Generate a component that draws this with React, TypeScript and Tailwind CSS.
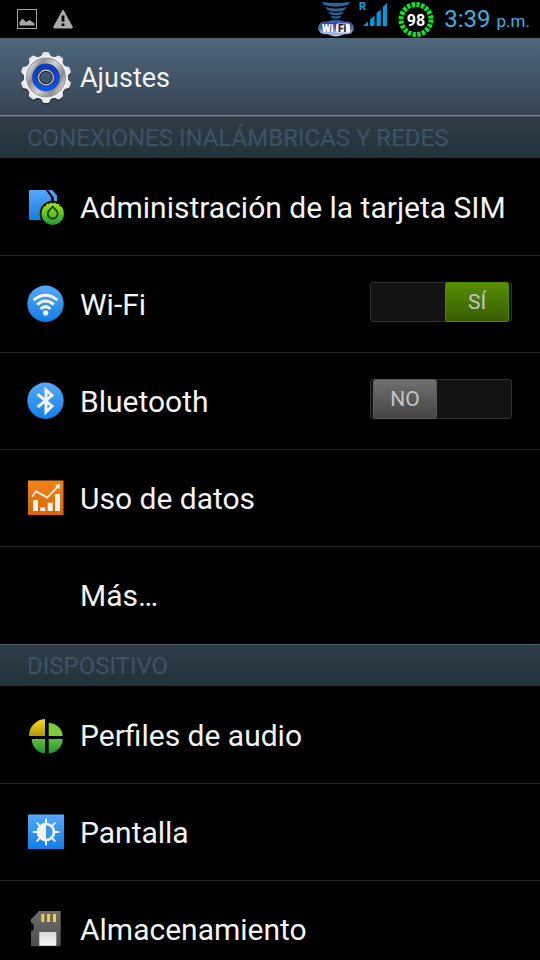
import { useState } from "react";
import type { ReactNode } from "react";

const GEAR_TEETH = [0, 36, 72, 108, 144, 180, 216, 252, 288, 324];
const SUN_RAYS = [0, 45, 90, 135, 180, 225, 270, 315];

function GearIcon() {
  return (
    <svg viewBox="0 0 52 54" className="h-[54px] w-[52px] shrink-0" aria-hidden="true">
      <defs>
        <linearGradient id="gear-body" x1="0" y1="0" x2="0" y2="1">
          <stop offset="0" stopColor="#dedede" />
          <stop offset="1" stopColor="#f6f6f6" />
        </linearGradient>
        <linearGradient id="gear-disc" x1="0" y1="0.2" x2="1" y2="0.8">
          <stop offset="0" stopColor="#f4f4f4" />
          <stop offset="0.25" stopColor="#8f8f8f" />
          <stop offset="0.5" stopColor="#d4d4d4" />
          <stop offset="0.78" stopColor="#8c8c8c" />
          <stop offset="1" stopColor="#efefef" />
        </linearGradient>
        <linearGradient id="gear-ring" x1="0" y1="0" x2="0" y2="1">
          <stop offset="0" stopColor="#1238b8" />
          <stop offset="1" stopColor="#1453dc" />
        </linearGradient>
        <g id="gear-shape">
          <circle cx="26" cy="26.5" r="22" />
          {GEAR_TEETH.map((a) => (
            <path key={a} d="M19.4 6.5 Q21.8 5 22.6 2.2 Q23 1 24.2 1 H27.8 Q29 1 29.4 2.2 Q30.2 5 32.6 6.5 Z" transform={`rotate(${a} 26 26.5)`} />
          ))}
        </g>
      </defs>
      <use href="#gear-shape" y="1.5" fill="#1d252e" opacity="0.7" />
      <use href="#gear-shape" fill="url(#gear-body)" />
      <circle cx="26" cy="26.5" r="19.5" fill="url(#gear-disc)" stroke="#858585" strokeWidth="0.8" />
      <circle cx="26" cy="26.5" r="10.7" fill="none" stroke="url(#gear-ring)" strokeWidth="6.4" />
      <circle cx="26" cy="26.5" r="7" fill="#42566b" stroke="#262626" strokeWidth="2.4" />
      <circle cx="26" cy="26.5" r="7.4" fill="none" stroke="#d0d0c8" strokeWidth="1.1" />
    </svg>
  );
}

function SimIcon() {
  return (
    <>
      <path d="M21.7 2 H26.3 L31 7.5 V14 H28 V10 Z" fill="#4aa0f5" />
      <path d="M4 2 H20.5 L25 8.5 V32 H4 Q3 32 3 31 V3 Q3 2 4 2 Z" fill="url(#blue)" />
      <path d="M20.8 2 L26 9 V15" fill="none" stroke="#000" strokeWidth="2" />
      <circle cx="26.7" cy="25.7" r="13" fill="#000" />
      <circle cx="26.7" cy="25.7" r="11.2" fill="url(#lime)" />
      <path d="M18.5 16 l1.2 2 M22.3 14 l0.8 2 M26.7 13.5 v2 M31.1 14 l-0.8 2 M34.9 16 l-1.2 2" stroke="#000" strokeWidth="1.5" />
      <path d="M26.7 18.6 L29.6 21.8 A4.9 4.9 0 1 1 23.8 21.8 Z" fill="none" stroke="#123c08" strokeWidth="1.7" />
    </>
  );
}

function WifiIcon() {
  return (
    <>
      <circle cx="19.5" cy="18.7" r="18.2" fill="url(#blue)" />
      <g fill="none" stroke="#f4f4f4" strokeWidth="3">
        <path d="M7.6 15.2 Q19.5 5.4 31.4 15.2" />
        <path d="M11.1 19.7 Q19.5 12.4 27.9 19.7" />
        <path d="M14.6 24 Q19.5 19.2 24.4 24" />
      </g>
      <circle cx="19.6" cy="28" r="2.7" fill="#f0f0f0" />
    </>
  );
}

function BluetoothIcon() {
  return (
    <>
      <circle cx="19.5" cy="18.7" r="18.2" fill="url(#blue)" />
      <path
        d="M11.6 12.2 L26 24 L20 30 V8 L26 13.4 L11.6 25.2"
        fill="none"
        stroke="#f4f4f4"
        strokeWidth="3"
      />
    </>
  );
}

function DataIcon() {
  return (
    <>
      <rect x="2" y="1.5" width="35.5" height="34.5" fill="url(#orange)" />
      <g fill="#f4f4f4">
        <rect x="7" y="21" width="5" height="11" />
        <rect x="14.3" y="28.3" width="5" height="3.7" />
        <rect x="21.7" y="23.7" width="5" height="8.3" />
        <rect x="29" y="15" width="5" height="17" />
        <path d="M34 4.8 L33.4 10.6 L28.8 6.2 Z" />
      </g>
      <path d="M6.3 17.7 L9.9 12.2 L21.2 18.6 L32 7.4" fill="none" stroke="#f4f4f4" strokeWidth="1.7" />
    </>
  );
}

function AudioIcon() {
  return (
    <>
      <path d="M19 3 V20 H3 A17 17 0 0 1 19 3 Z" fill="url(#yellow)" />
      <path d="M22.7 6.7 V20 H36.7 A15 14 0 0 0 22.7 6.7 Z" fill="#7bcb3a" />
      <path d="M19 37.3 V23 H5.7 A14 14.5 0 0 0 19 37.3 Z" fill="url(#green)" />
      <path d="M22.7 37.3 V23 H36.7 A14.5 14.5 0 0 1 22.7 37.3 Z" fill="url(#green)" />
    </>
  );
}

function DisplayIcon() {
  return (
    <>
      <rect x="2" y="1.5" width="36" height="34.5" fill="url(#blue)" />
      <g stroke="#f4f4f4" strokeWidth="2">
        {SUN_RAYS.map((a) => (
          <path key={a} d="M20 5.8 V11" transform={`rotate(${a} 20 19)`} />
        ))}
      </g>
      <circle cx="20" cy="19" r="8" fill="#3b95ee" stroke="#f4f4f4" strokeWidth="2.6" />
      <path d="M20 10 A9 9 0 0 0 20 28 Z" fill="#f4f4f4" />
    </>
  );
}

function StorageIcon() {
  return (
    <>
      <path d="M13 1 H34.7 V36.3 H5 V21.3 L7.7 20 V14.3 L5 12.7 V9.3 Z" fill="url(#card)" />
      <g fill="#f2cf3c">
        <rect x="15.3" y="4" width="3" height="8" />
        <rect x="21.1" y="4" width="3" height="8" />
        <rect x="27" y="4" width="3" height="8" />
      </g>
      <rect x="13.3" y="22" width="17" height="13.7" fill="url(#label)" />
    </>
  );
}

function Gradients() {
  const stops = [
    ["blue", "#55a9f8", "#127fe6"],
    ["lime", "#a4ec12", "#219a35"],
    ["orange", "#f08418", "#dc6400"],
    ["yellow", "#f2dc1c", "#b8950c"],
    ["green", "#62bf3c", "#1f9437"],
    ["card", "#6e6e6e", "#4e4e4e"],
    ["label", "#d8d8d8", "#f6f6f6"],
  ];
  return (
    <svg className="absolute h-0 w-0" aria-hidden="true">
      <defs>
        {stops.map(([id, from, to]) => (
          <linearGradient key={id} id={id} x1="0" y1="0" x2="0" y2="1">
            <stop offset="0" stopColor={from} />
            <stop offset="1" stopColor={to} />
          </linearGradient>
        ))}
      </defs>
    </svg>
  );
}

function StatusBar() {
  return (
    <div className="flex h-[38px] shrink-0 items-center justify-between bg-black pr-2.5 pl-4">
      <div className="flex items-center gap-3.5">
        <svg viewBox="0 0 22 22" className="h-[22px] w-[22px]" aria-hidden="true">
          <rect x="1.5" y="1.5" width="19" height="19" fill="none" stroke="#a5a5a5" />
          <path d="M3.5 17.5 V14 L6.5 10.5 L10 14 L13.5 12 L18.5 15.5 V17.5 Z" fill="#a5a5a5" />
        </svg>
        <svg viewBox="0 0 22 22" className="h-[22px] w-[22px]" aria-hidden="true">
          <path d="M11 2 L20.3 19 Q20.6 20 19.6 20 H2.4 Q1.4 20 1.7 19 Z" fill="#ababab" stroke="#ababab" strokeLinejoin="round" />
          <path d="M9.6 7.5 h2.8 v6 h-2.8 Z M9.6 15.5 h2.8 v2.5 h-2.8 Z" fill="#000" />
        </svg>
      </div>
      <div className="flex items-center">
        <svg viewBox="0 0 36 36" className="h-9 w-9" aria-hidden="true">
          <defs>
            <linearGradient id="wifi-badge" x1="0" y1="0" x2="0" y2="1">
              <stop offset="0" stopColor="#1c3f9c" />
              <stop offset="0.5" stopColor="#4a63a8" />
              <stop offset="1" stopColor="#c3d2f0" />
            </linearGradient>
          </defs>
          <g fill="#2c6594">
            <path d="M4 0.8 Q18 3.4 32 0.8 L30 4 Q18 7.6 6 4 Z" />
            <path d="M7.5 6 Q18 9 28.5 6 L26.5 9 Q18 12 9.5 9 Z" />
            <path d="M10.5 10.8 Q18 13 25.5 10.8 L24 13.2 Q18 15.4 12 13.2 Z" />
            <path d="M13 14.8 Q18 16.2 23 14.8 L22 17 Q18 18.2 14 17 Z" />
          </g>
          <ellipse cx="18" cy="27" rx="12" ry="8.5" fill="url(#wifi-badge)" />
          <rect x="0.5" y="21" width="35" height="12" rx="6" fill="url(#wifi-badge)" stroke="#7f93cc" strokeWidth="0.6" />
          <rect x="18" y="22.5" width="14" height="9" rx="2" fill="#f4f4f4" />
          <text x="4" y="30.5" fill="#fff" className="font-[Roboto] text-[10px] font-black">Wi</text>
          <text x="20" y="30.5" fill="#223" className="font-[Roboto] text-[10px] font-black">Fi</text>
        </svg>
        <svg viewBox="0 0 30 36" className="ml-1 h-9 w-[30px]" aria-hidden="true">
          <text x="1" y="9" fill="#0b96dc" className="font-[Roboto] text-[11px] font-black">R</text>
          <path d="M5 25 L10 20.5 V25 Z M12 18.5 L16.5 14.5 V25 H12 Z M18.5 12 L22.8 8.5 V25 H18.5 Z M24.8 6 L29 2 V25 H24.8 Z" fill="#0b96dc" />
        </svg>
        <svg viewBox="0 0 36 36" className="ml-2.5 h-9 w-9" aria-hidden="true">
          <circle cx="18" cy="18.5" r="15" fill="none" stroke="#00f01c" strokeWidth="5" strokeDasharray="3.2 1.512" />
          <text x="18" y="24.5" textAnchor="middle" fill="#fff" className="font-[Roboto] text-[16px] font-bold">98</text>
        </svg>
        <time dateTime="15:39" className="ml-2.5 flex items-baseline gap-1.5 pt-0.5 text-[24px] leading-8 text-[#33b5e5]">
          3:39 <span className="text-[17px]">p.m.</span>
        </time>
      </div>
    </div>
  );
}

function Toggle({ id, checked, onChange }: { id: string; checked: boolean; onChange: (v: boolean) => void }) {
  return (
    <label className="relative mr-7 mb-1 flex h-10 w-[142px] shrink-0 cursor-pointer rounded-[3px] border border-[#303030] bg-[#131313]">
      <input
        id={id}
        type="checkbox"
        role="switch"
        aria-labelledby={`${id}-label`}
        checked={checked}
        onChange={(e) => onChange(e.target.checked)}
        className="sr-only"
      />
      <span
        className={
          checked
            ? "-my-px mr-0.5 ml-auto flex w-16 items-center justify-center rounded-[3px] border border-[#4d8a08] bg-linear-to-b from-[#578f05] to-[#385c03] pt-0.5 text-[21px] text-[#c4c4c4]"
            : "-my-px ml-0.5 flex w-16 items-center justify-center rounded-[3px] border border-[#5c5c5c] bg-linear-to-b from-[#707070] to-[#454545] pt-0.5 text-[21px] text-[#c4c4c4]"
        }
      >
        {checked ? "SÍ" : "NO"}
      </span>
    </label>
  );
}

function SectionTitle({ children }: { children: ReactNode }) {
  return (
    <h2 className="flex h-[42px] items-center border-t border-[#4b5a64] bg-linear-to-b from-[#2f3c47] to-[#22333a] pl-[27px] text-[24px] text-[#3d5266] uppercase">
      {children}
    </h2>
  );
}

function Row({ id, label, icon, children }: { id?: string; label: string; icon?: ReactNode; children?: ReactNode }) {
  const content = (
    <>
      <svg viewBox="0 0 38 38" className="h-[38px] w-[38px] shrink-0" aria-hidden="true">
        {icon}
      </svg>
      <span id={id && `${id}-label`} className="flex-1 text-left whitespace-nowrap">
        {label}
      </span>
    </>
  );

  return (
    <li className="flex h-[97px] items-center border-b border-[#262626] text-[30px] text-[#f3f3f3] last:border-transparent">
      {children ? (
        <div className="flex flex-1 items-center gap-4 pl-[26px]">
          {content}
          {children}
        </div>
      ) : (
        <button type="button" className="flex h-full flex-1 items-center gap-4 pl-[26px]">
          {content}
        </button>
      )}
    </li>
  );
}

export default function App() {
  const [wifi, setWifi] = useState(true);
  const [bluetooth, setBluetooth] = useState(false);

  return (
    <div className="flex h-screen flex-col overflow-hidden bg-black font-[Roboto,sans-serif]">
      <Gradients />
      <StatusBar />

      <header className="flex h-[78px] shrink-0 items-center gap-2 border-b border-[#6c8393] bg-linear-to-b from-[#4f677d] to-[#364453] pt-0.5 pl-5">
        <GearIcon />
        <h1 className="pt-0.5 text-[27px] text-[#f3f3f3]">Ajustes</h1>
      </header>

      <main className="min-h-0 flex-1 overflow-y-auto [scrollbar-width:none]">
        <section>
          <SectionTitle>Conexiones inalámbricas y redes</SectionTitle>
          <ul className="pt-px">
            <Row label="Administración de la tarjeta SIM" icon={<SimIcon />} />
            <Row id="wifi" label="Wi-Fi" icon={<WifiIcon />}>
              <Toggle id="wifi" checked={wifi} onChange={setWifi} />
            </Row>
            <Row id="bluetooth" label="Bluetooth" icon={<BluetoothIcon />}>
              <Toggle id="bluetooth" checked={bluetooth} onChange={setBluetooth} />
            </Row>
            <Row label="Uso de datos" icon={<DataIcon />} />
            <Row label="Más…" />
          </ul>
        </section>

        <section>
          <SectionTitle>Dispositivo</SectionTitle>
          <ul className="pt-px">
            <Row label="Perfiles de audio" icon={<AudioIcon />} />
            <Row label="Pantalla" icon={<DisplayIcon />} />
            <Row label="Almacenamiento" icon={<StorageIcon />} />
          </ul>
        </section>
      </main>
    </div>
  );
}
